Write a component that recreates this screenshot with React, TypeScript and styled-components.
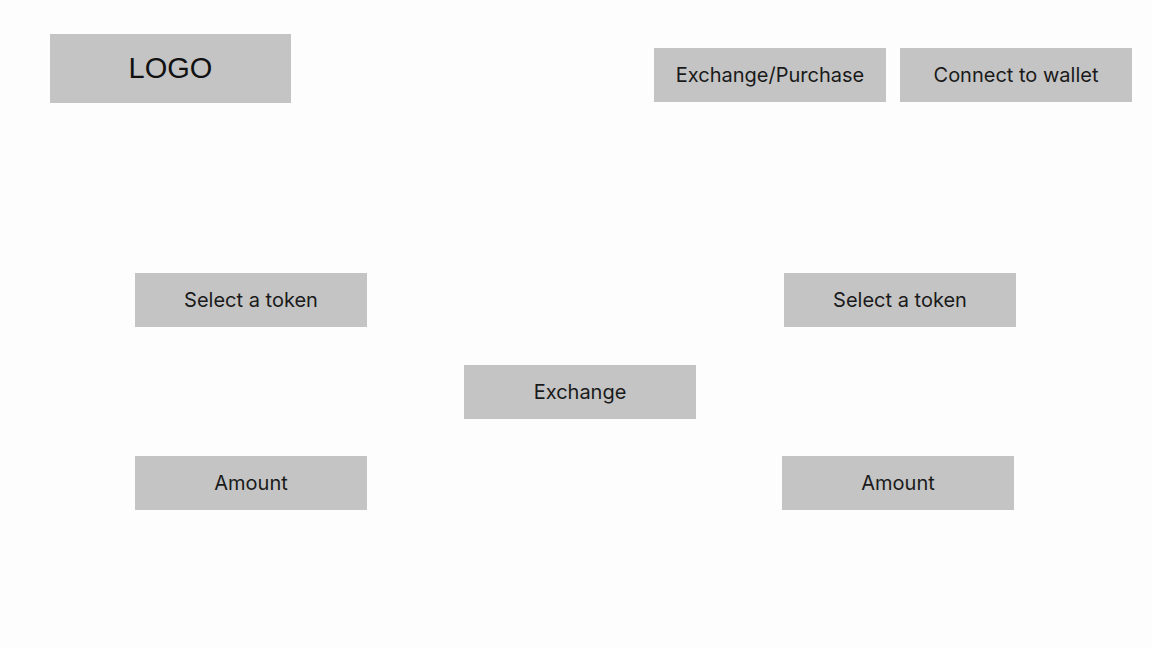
import styled, { createGlobalStyle } from 'styled-components';

const GlobalStyle = createGlobalStyle`
  html, body {
    margin: 0;
    padding: 0;
    background: #fdfdfd;
  }
  body {
    font-family: Inter, "Noto Sans", sans-serif;
    color: #1c1c1c;
  }
`;

const Page = styled.div`
  width: 1152px;
  height: 648px;
  box-sizing: border-box;
  padding: 34px 20px 0 50px;
`;

const Header = styled.header`
  display: flex;
  justify-content: space-between;
  align-items: flex-start;
`;

const Logo = styled.div`
  width: 241px;
  height: 69px;
  background: #c4c4c4;
  display: flex;
  align-items: center;
  justify-content: center;
  font-family: "Liberation Sans", Arial, sans-serif;
  font-size: 29px;
  color: #111;
`;

const Nav = styled.nav`
  display: flex;
  gap: 14px;
  margin-top: 14px;
`;

const Block = styled.button`
  width: 232px;
  height: 54px;
  border: none;
  border-radius: 0;
  background: #c4c4c4;
  padding: 0;
  display: flex;
  align-items: center;
  justify-content: center;
  font-family: Inter, "Noto Sans", sans-serif;
  font-size: 20px;
  color: #1a1a1a;
  cursor: pointer;
`;

// left column, gap, exchange column, gap, right column
const Swap = styled.main`
  display: grid;
  grid-template-columns: 232px 97px 232px 86px 234px;
  grid-template-rows: 54px 54px 54px;
  row-gap: 38px;
  margin: 170px 0 0 85px;
`;

const Cell = styled.div<{ $col: number; $row: number; $align?: 'start' | 'end'; $lift?: number }>`
  grid-column: ${({ $col }) => $col};
  grid-row: ${({ $row }) => $row};
  justify-self: ${({ $align }) => $align ?? 'start'};
  margin-top: ${({ $lift }) => -($lift ?? 0)}px;
`;

export default function App() {
  return (
    <>
      <GlobalStyle />
      <Page>
        <Header>
          <Logo>LOGO</Logo>
          <Nav>
            <Block>Exchange/Purchase</Block>
            <Block>Connect to wallet</Block>
          </Nav>
        </Header>

        <Swap>
          <Cell $col={1} $row={1}>
            <Block>Select a token</Block>
          </Cell>
          <Cell $col={5} $row={1} $align="end">
            <Block>Select a token</Block>
          </Cell>
          <Cell $col={3} $row={2}>
            <Block>Exchange</Block>
          </Cell>
          <Cell $col={1} $row={3} $lift={1}>
            <Block>Amount</Block>
          </Cell>
          <Cell $col={5} $row={3} $lift={1}>
            <Block>Amount</Block>
          </Cell>
        </Swap>
      </Page>
    </>
  );
}
